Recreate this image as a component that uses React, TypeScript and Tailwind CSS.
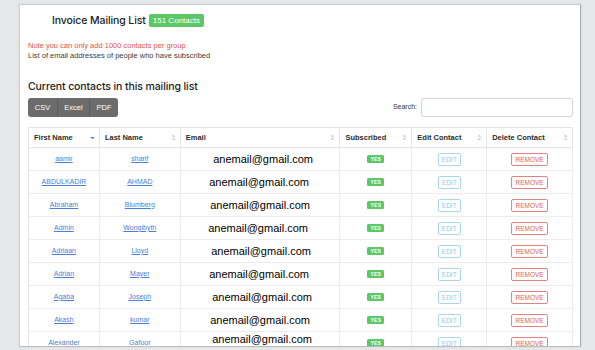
import React from "react";

const rows: { f: string; l: string; pad: string; lift?: boolean }[] = [
  { f: "aamir", l: "sharif", pad: "pl-[6px]" },
  { f: "ABDULKADIR", l: "AHMAD", pad: "pr-[2px]" },
  { f: "Abraham", l: "Blumberg", pad: "" },
  { f: "Admin", l: "Wongibyth", pad: "pr-[4px]" },
  { f: "Adriaan", l: "Lloyd", pad: "pl-[2px]" },
  { f: "Adrian", l: "Mayer", pad: "pr-[2px]" },
  { f: "Agaba", l: "Joseph", pad: "pl-[4px]" },
  { f: "Akash", l: "kumar", pad: "" },
  { f: "Alexander", l: "Gafoor", pad: "pl-[4px]", lift: true },
];

function SortBoth() {
  return (
    <svg width="5" height="7" viewBox="0 0 5 7" className="shrink-0">
      <path d="M2.5 0.5 L4.5 2.8 L0.5 2.8 Z" fill="#cfcfcf" />
      <path d="M2.5 6.5 L4.5 4.2 L0.5 4.2 Z" fill="#cfcfcf" />
    </svg>
  );
}

function SortDown() {
  return (
    <svg width="5" height="7" viewBox="0 0 5 7" className="shrink-0">
      <path d="M2.5 5.3 L4.6 3 L0.4 3 Z" fill="#4a80d9" />
    </svg>
  );
}

const headers = [
  { t: "First Name", w: "w-[71px]", active: true },
  { t: "Last Name", w: "w-[81px]" },
  { t: "Email", w: "w-[160px]" },
  { t: "Subscribed", w: "w-[72px]" },
  { t: "Edit Contact", w: "w-[75px]" },
  { t: "Delete Contact", w: "w-[86px]" },
];

export default function App() {
  return (
    <div className="w-[595px] h-[350px] bg-[#e6e7e8] overflow-hidden pt-[4px] pl-[19px] font-['Liberation_Sans',Arial,sans-serif]">
      <div className="w-[562px] h-[343px] bg-white border border-[#cdcdcd] border-r-[#a9a9a9] border-b-[#bdbdbd] overflow-hidden pl-[8px] pr-[7px] shadow-[0_0_2px_rgba(0,0,0,0.08)]">
        <div className="flex items-center pt-[9px] pl-[24px] h-[22px]">
          <span className="font-['Inter',sans-serif] font-medium text-[10.5px] leading-[13px] text-[#222] tracking-[-0.1px]">
            Invoice Mailing List
          </span>
          <span className="ml-[3px] bg-[#5cc765] text-white text-[8px] leading-[13px] h-[13px] px-[4px] rounded-[2px]">
            151 Contacts
          </span>
        </div>
        <div className="mt-[14px] text-[7.5px] leading-[10px] text-[#e0534f]">
          Note you can only add 1000 contacts per group
        </div>
        <div className="text-[7.5px] leading-[10px] text-[#3c3c3c]">
          List of email addresses of people who have subscribed
        </div>
        <div className="mt-[19px] font-['Inter',sans-serif] font-medium text-[10.5px] leading-[14px] text-[#222] tracking-[-0.1px]">
          Current contacts in this mailing list
        </div>
        <div className="mt-[4px] flex items-center justify-between h-[19px]">
          <div className="flex h-[19px] rounded-[3px] overflow-hidden bg-[#6c6c6c] text-white text-[7.5px]">
            <div className="w-[30px] flex items-center justify-center border-r border-[#5a5a5a]">CSV</div>
            <div className="w-[32px] flex items-center justify-center border-r border-[#5a5a5a]">Excel</div>
            <div className="w-[28px] flex items-center justify-center">PDF</div>
          </div>
          <div className="flex items-center">
            <span className="text-[7px] text-[#333] mr-[4px]">Search:</span>
            <div className="w-[152px] h-[19px] border border-[#d4d4d4] rounded-[3px] bg-white" />
          </div>
        </div>
        <div className="mt-[10px] border-t border-l border-[#e6e6e6]">
          <div className="flex h-[20px] border-b border-[#e6e6e6]">
            {headers.map((h) => (
              <div
                key={h.t}
                className={`${h.w} flex items-center justify-between pl-[5px] pr-[4px] border-r border-[#e6e6e6] text-[7.5px] font-bold text-[#2b2b2b]`}
              >
                <span>{h.t}</span>
                {h.active ? <SortDown /> : <SortBoth />}
              </div>
            ))}
          </div>
          {rows.map((r) => (
            <div key={r.f} className="flex h-[23px] border-b border-[#ececec]">
              <div className="w-[71px] flex items-center justify-center border-r border-[#ececec]">
                <span className="text-[7px] text-[#4a80d9] underline underline-offset-[1px]">{r.f}</span>
              </div>
              <div className="w-[81px] flex items-center justify-center border-r border-[#ececec]">
                <span className="text-[7px] text-[#4a80d9] underline underline-offset-[1px]">{r.l}</span>
              </div>
              <div
                className={`w-[160px] flex justify-center border-r border-[#ececec] ${r.pad} ${
                  r.lift ? "items-start pt-[1px]" : "items-center"
                }`}
              >
                <span className="text-[11px] leading-[13px] text-black">anemail@gmail.com</span>
              </div>
              <div className="w-[72px] flex items-center justify-center border-r border-[#ececec]">
                <span className="bg-[#5cc765] text-white text-[5px] font-bold leading-[8px] h-[8px] w-[17px] text-center rounded-[1.5px] tracking-[0.2px]">
                  YES
                </span>
              </div>
              <div className="w-[75px] flex items-center justify-center border-r border-[#ececec]">
                <span className="border border-[#a9d6ee] text-[#8ccaea] text-[6.5px] leading-[11px] h-[13px] w-[23px] text-center rounded-[2px]">
                  EDIT
                </span>
              </div>
              <div className="w-[86px] flex items-center justify-center border-r border-[#ececec]">
                <span className="border border-[#e2847f] text-[#dd5f5a] text-[6.5px] leading-[11px] h-[13px] w-[37px] text-center rounded-[2px]">
                  REMOVE
                </span>
              </div>
            </div>
          ))}
        </div>
      </div>
    </div>
  );
}
